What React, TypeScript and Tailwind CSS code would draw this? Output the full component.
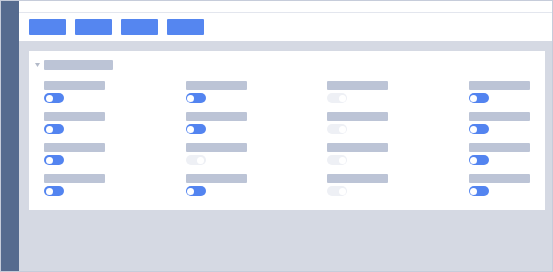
import React from "react";

const rows: boolean[][] = [
  [true, true, false, true],
  [true, true, false, true],
  [true, false, false, true],
  [true, true, false, true],
];

const Toggle = ({ on }: { on: boolean }) => (
  <div
    className={
      on
        ? "w-[20px] h-[10px] rounded-full bg-[#5384f0] flex items-center justify-start px-[1.5px]"
        : "w-[20px] h-[10px] rounded-full bg-[#eef0f5] flex items-center justify-end px-[1.5px]"
    }
  >
    <div className="w-[7px] h-[7px] rounded-full bg-white" />
  </div>
);

export default function App() {
  return (
    <div className="w-[553px] h-[272px] flex border border-[#c6ccda] bg-[#d5d9e3]">
      <div className="w-[18px] h-full bg-[#566b8f]" />
      <div className="flex-1 flex flex-col">
        <div className="h-[12px] bg-white border-b border-[#e3e6ee] shrink-0" />
        <div className="h-[28px] bg-white flex items-center gap-[9px] pl-[10px] shrink-0">
          <div className="w-[37px] h-[16px] bg-[#5586f0] rounded-[1px]" />
          <div className="w-[37px] h-[16px] bg-[#5586f0] rounded-[1px]" />
          <div className="w-[37px] h-[16px] bg-[#5586f0] rounded-[1px]" />
          <div className="w-[37px] h-[16px] bg-[#5586f0] rounded-[1px]" />
        </div>
        <div className="pt-[10px] pl-[10px] pr-[7px]">
          <div className="h-[159px] bg-white pl-[15px] pr-[15px] pt-[9px]">
            <div className="flex items-center h-[10px] -ml-[9px]">
              <svg width="5" height="4" viewBox="0 0 5 4" className="mr-[4px]">
                <polygon points="0,0 5,0 2.5,4" fill="#b3bac9" />
              </svg>
              <div className="w-[69px] h-[10px] rounded-[1px] bg-[#bcc4d6]" />
            </div>
            <div className="grid grid-cols-4 gap-x-[80px] gap-y-[9px] mt-[11px]">
              {rows.map((r, i) =>
                r.map((on, j) => (
                  <div key={`${i}-${j}`} className="flex flex-col gap-[3px]">
                    <div className="w-[61px] h-[9px] rounded-[1px] bg-[#bcc4d6]" />
                    <Toggle on={on} />
                  </div>
                ))
              )}
            </div>
          </div>
        </div>
      </div>
    </div>
  );
}
